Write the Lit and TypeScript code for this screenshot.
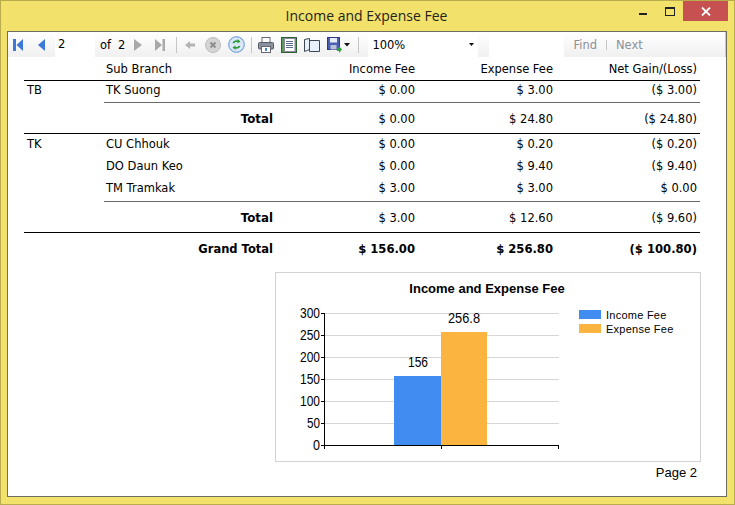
import { LitElement, html, css, svg } from "lit";
import { customElement } from "lit/decorators.js";

type Row = { a?: string; b?: string; v: string[]; cls: string };

const rowsA: Row[] = [{ a: "TB", b: "TK Suong", v: ["$ 0.00", "$ 3.00", "($ 3.00)"], cls: "r-tb" }];
const totalA: Row = { b: "Total", v: ["$ 0.00", "$ 24.80", "($ 24.80)"], cls: "r-total" };
const rowsB: Row[] = [
  { a: "TK", b: "CU Chhouk", v: ["$ 0.00", "$ 0.20", "($ 0.20)"], cls: "r-first" },
  { b: "DO Daun Keo", v: ["$ 0.00", "$ 9.40", "($ 9.40)"], cls: "r-mid" },
  { b: "TM Tramkak", v: ["$ 3.00", "$ 3.00", "$ 0.00"], cls: "r-mid" },
];
const totalB: Row = { b: "Total", v: ["$ 3.00", "$ 12.60", "($ 9.60)"], cls: "r-total" };
const grand: Row = { b: "Grand Total", v: ["$ 156.00", "$ 256.80", "($ 100.80)"], cls: "r-total grand" };

const chart = svg`
  <text x="487" y="293" text-anchor="middle" class="ct">Income and Expense Fee</text>
  ${[0, 1, 2, 3, 4, 5, 6].map((i) => {
    const y = 313 + i * 22;
    const label = 300 - i * 50;
    const len = label >= 100 ? 20 : label > 0 ? 13 : 7;
    return svg`
      ${i < 6 ? svg`<line x1="325" x2="559" y1=${y + 0.5} y2=${y + 0.5} stroke="#d6d6d6"/>` : ""}
      <line x1="321" x2="325" y1=${y + 0.5} y2=${y + 0.5} stroke="#000"/>
      <text x="320" y=${y + 5} text-anchor="end" class="ax" textLength=${len} lengthAdjust="spacingAndGlyphs">${label}</text>`;
  })}
  <rect x="394" y="376" width="47" height="69" fill="#418cf0"/>
  <rect x="441" y="332" width="46" height="113" fill="#fcb441"/>
  <text x="418" y="367" text-anchor="middle" class="ax" textLength="20" lengthAdjust="spacingAndGlyphs">156</text>
  <text x="464" y="323" text-anchor="middle" class="ax" textLength="32" lengthAdjust="spacingAndGlyphs">256.8</text>
  <line x1="324.500" x2="324.500" y1="313" y2="449" stroke="#000"/>
  <line x1="324" x2="559" y1="445.500" y2="445.500" stroke="#000"/>
  <line x1="441.500" x2="441.500" y1="445" y2="449" stroke="#000"/>
  <line x1="558.500" x2="558.500" y1="445" y2="449" stroke="#000"/>
  <rect x="579" y="310" width="22" height="9" fill="#418cf0"/>
  <rect x="579" y="324" width="22" height="9" fill="#fcb441"/>
  <text x="606" y="319" class="lg">Income Fee</text>
  <text x="606" y="333" class="lg">Expense Fee</text>
`;

@customElement("app-root")
export class AppRoot extends LitElement {
  static styles = css`
    :host { display: block; width: 735px; height: 505px; }
    * { box-sizing: border-box; }
    .win { width: 735px; height: 505px; background: #f2e26b; border: 1px solid #b8ac4c; display: flex; flex-direction: column; padding: 0 7px 7px 6px; font-family: "DejaVu Sans", sans-serif; color: #000; }
    .bar { height: 30px; display: grid; grid-template-columns: 1fr auto 1fr; margin-right: -1px; }
    .title { grid-column: 2; font: 14px/30px "Open Sans", "Noto Sans", sans-serif; color: #23231a; margin-right: 2px; }
    .ctrls { grid-column: 3; justify-self: end; display: flex; height: 20px; }
    .min { width: 8px; height: 2px; background: #222; margin: 12px 18px 0 0; }
    .max { width: 10px; height: 9px; border: 1px solid #222; border-top-width: 2px; margin: 6px 8px 0 0; }
    .close { width: 45px; height: 20px; background: #c75050; color: #fff; display: flex; align-items: center; justify-content: center; }
    .panel { flex: 1; background: #fff; border: 1px solid #6d6d62; display: flex; flex-direction: column; min-height: 0; }
    .tb { height: 25px; display: flex; align-items: center; background: linear-gradient(#fff, #f0f0f0); flex: none; border-right: 1px solid #c8c8c8; font: 11.500px "DejaVu Sans", sans-serif; }
    .tb svg { display: block; flex: none; }
    .sep { width: 1px; height: 16px; background: #c6c6c6; flex: none; }
    .pg { width: 40px; height: 25px; background: #fff; line-height: 24px; padding-left: 3px; margin-left: 10px; flex: none; }
    .txt { flex: none; }
    .zoom { width: 110px; height: 25px; background: #fff; margin-left: 9px; display: flex; align-items: center; justify-content: space-between; padding: 0 4px; flex: none; }
    .find { width: 75px; height: 25px; background: #fff; margin-left: 11px; flex: none; }
    .link { color: #8c9096; flex: none; }
    .body { flex: 1; padding: 0 0 0 16px; display: flex; flex-direction: column; min-height: 0; }
    .row { display: grid; grid-template-columns: 80px 169px 142px 138px 144px; width: 676px; font-size: 11.500px; align-items: center; }
    .a { padding-left: 3px; }
    .b { padding-left: 2px; }
    .n { text-align: right; }
    .head { height: 23px; }
    .r-tb { height: 21px; padding-bottom: 3px; }
    .r-first { height: 19px; }
    .r-mid { height: 24px; padding-top: 1px; }
    .r-mid + .r-mid { padding-top: 0; padding-bottom: 2px; }
    .r-total { height: 30px; padding-top: 2px; }
    .r-total .b { text-align: right; font-weight: 700; padding: 0; font-size: 11.800px; }
    .grand { font-weight: 700; font-size: 11.600px; }
    .grand .b { font-size: 11.500px; }
    .rule { height: 1px; background: #000; width: 676px; flex: none; }
    .rule.sub { margin-left: 80px; width: 596px; background: #6a6a6a; }
    .chart { width: 426px; height: 190px; margin: 9px 0 0 251px; border: 1px solid #d3d3d3; flex: none; }
    .chart svg { display: block; }
    .ct { font: 700 13px "Liberation Sans", sans-serif; }
    .ax { font: 14px "Liberation Sans", sans-serif; }
    .lg { font: 11px "Liberation Sans", sans-serif; letter-spacing: 0.250px; }
    .page { width: 673px; text-align: right; font: 13px/20px "Liberation Sans", sans-serif; padding-top: 1px; }
  `;

  private row(r: Row) {
    return html`<div class="row ${r.cls}">
      <div class="a">${r.a ?? ""}</div>
      <div class="b">${r.b ?? ""}</div>
      ${r.v.map((x) => html`<div class="n">${x}</div>`)}
    </div>`;
  }

  private icons() {
    const nav = (d: string, fill: string, w: number, ml: number) =>
      html`<svg width=${w} height="14" viewBox="0 0 ${w} 14" style="margin-left:${ml}px"><path d=${d} fill=${fill}/></svg>`;
    return html`
      ${nav("M0 1h3v12H0zM10 1v12L3.500 7z", "#3c78d8", 10, 5)}
      ${nav("M8 1v12L1 7z", "#3c78d8", 8, 14)}
      <div class="pg">2</div>
      <span class="txt" style="margin-left:5px">of</span>
      <span class="txt" style="margin-left:7px">2</span>
      ${nav("M0 1v12l8-6z", "#a9a9a9", 8, 9)}
      ${nav("M0 1v12l7-6zM7.500 1H10v12H7.500z", "#a9a9a9", 10, 13)}
      <div class="sep" style="margin-left:11px"></div>
      <svg style="margin-left:8px" width="10" height="10" viewBox="0 0 10 10"><path d="M0 5l5-4v2.500h5v3H5V9z" fill="#b4b4b4"/></svg>
      <svg style="margin-left:10px" width="16" height="16" viewBox="0 0 16 16"><circle cx="8" cy="8" r="7.500" fill="#d4d4d4" stroke="#bcbcbc"/><path d="M5.500 5.500l5 5M10.500 5.500l-5 5" stroke="#8e8e8e" stroke-width="2"/></svg>
      <svg style="margin-left:7px" width="17" height="17" viewBox="0 0 17 17"><circle cx="8.500" cy="8.500" r="7.800" fill="#dbe8fa" stroke="#5b8fd6"/><path d="M4.500 7c.8-2.200 3-3 5-2.500V3l3 2.500-3 2V6C8 5.700 7 6 6.300 7.200z" fill="#2e9a3a"/><path d="M12.500 10c-.8 2.200-3 3-5 2.500V14l-3-2.500 3-2V11c1.500.3 2.500 0 3.200-1.200z" fill="#2e9a3a"/></svg>
      <div class="sep" style="margin-left:6px"></div>
      <svg style="margin-left:6px" width="16" height="16" viewBox="0 0 16 16"><rect x="4" y="0.500" width="8" height="5" fill="#fff" stroke="#667"/><rect x="0.500" y="5.500" width="15" height="6.500" rx="1" fill="#8a919c" stroke="#555e6c"/><rect x="3.500" y="9.500" width="9" height="6" fill="#fff" stroke="#667"/><rect x="7" y="11" width="2" height="3" fill="#4a86d8"/></svg>
      <svg style="margin-left:7px" width="16" height="16" viewBox="0 0 16 16"><rect x="0.500" y="0.500" width="15" height="15" fill="#5d9a5d" stroke="#2f5f35"/><rect x="3.500" y="1.500" width="10.500" height="13" fill="#fff" stroke="#889"/><path d="M5 4.500h7M5 6.500h7M5 8.500h7M5 10.500h7" stroke="#5b6b88"/></svg>
      <svg style="margin-left:7px" width="16" height="14" viewBox="0 0 16 14"><path d="M.5 1.500l5 -1v11l-5 2zM5.500 2.500h10v11h-10z" fill="#e8f0fb" stroke="#3d4652"/></svg>
      <svg style="margin-left:7px" width="16" height="16" viewBox="0 0 16 16"><rect x="0.500" y="0.500" width="12" height="12" fill="#4b5fb0" stroke="#2f3d80"/><rect x="3" y="1" width="7" height="4.500" fill="#e8ecf8"/><rect x="3.500" y="8" width="6" height="4.500" fill="#b8bfd6"/><path d="M10 11h2V9l3 3.500-3 3.500v-2h-2z" fill="#2ea33c"/></svg>
      <svg style="margin-left:1px" width="6" height="4" viewBox="0 0 6 4"><path d="M0 0h6L3 3.500z" fill="#111"/></svg>
      <div class="sep" style="margin-left:8px"></div>
      <div class="zoom"><span>100%</span><svg width="5" height="3" viewBox="0 0 5 3"><path d="M0 0h5L2.500 3z" fill="#111"/></svg></div>
      <div class="find"></div>
      <span class="link" style="margin-left:9px">Find</span>
      <div class="sep" style="margin-left:9px;height:10px"></div>
      <span class="link" style="margin-left:9px">Next</span>
    `;
  }

  render() {
    return html`<div class="win">
      <div class="bar">
        <div class="title">Income and Expense Fee</div>
        <div class="ctrls">
          <div class="min"></div>
          <div class="max"></div>
          <div class="close"><svg width="10" height="9" viewBox="0 0 10 9"><path d="M1 .5l8 8M9 .5l-8 8" stroke="#fff" stroke-width="1.800"/></svg></div>
        </div>
      </div>
      <div class="panel">
        <div class="tb">${this.icons()}</div>
        <div class="body">
          <div class="row head">
            <div></div><div class="b">Sub Branch</div>
            <div class="n">Income Fee</div><div class="n">Expense Fee</div><div class="n">Net Gain/(Loss)</div>
          </div>
          <div class="rule"></div>
          ${rowsA.map((r) => this.row(r))}
          <div class="rule sub"></div>
          ${this.row(totalA)}
          <div class="rule"></div>
          ${rowsB.map((r) => this.row(r))}
          <div class="rule sub"></div>
          ${this.row(totalB)}
          <div class="rule"></div>
          ${this.row(grand)}
          <div class="chart"><svg width="424" height="188" viewBox="276 273 424 188">${chart}</svg></div>
          <div class="page">Page 2</div>
        </div>
      </div>
    </div>`;
  }
}
